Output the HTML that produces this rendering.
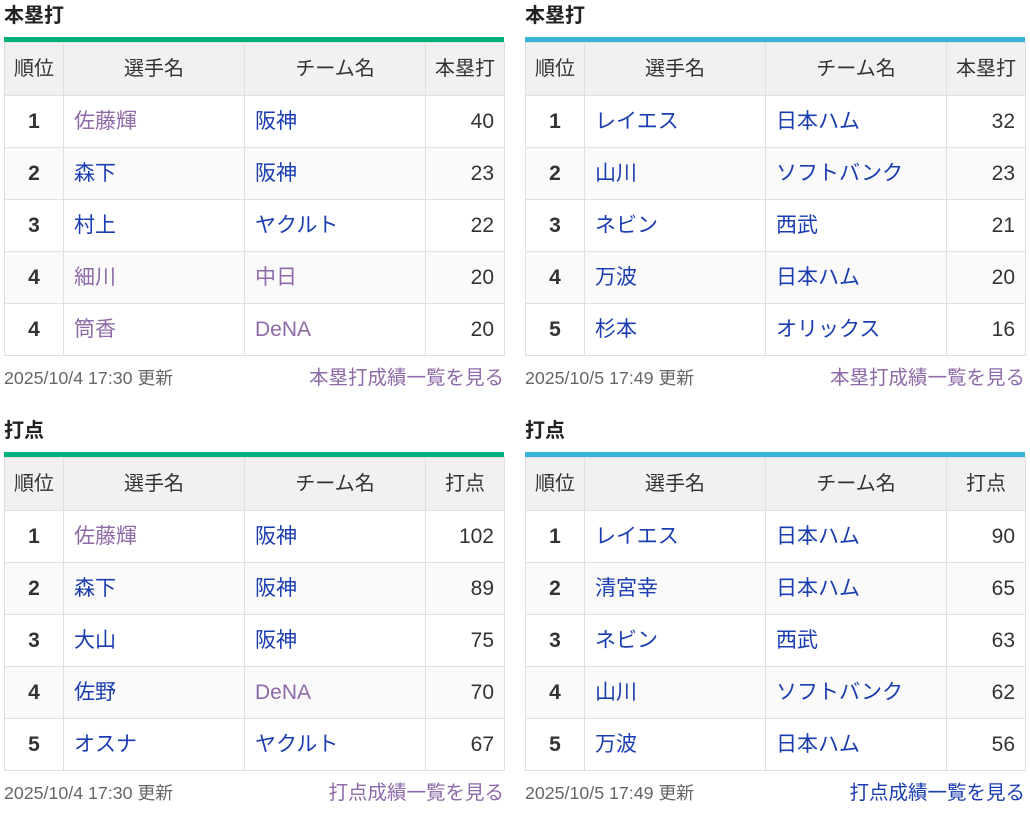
<!DOCTYPE html>
<html><head><meta charset="utf-8"><style>
body{margin:0;background:#fff;font-family:"Liberation Sans","Noto Sans CJK JP",sans-serif;color:#333;}
.blk{position:absolute;width:500px;}
h2{margin:0;height:37px;font-size:20px;font-weight:bold;line-height:32px;color:#222;}
.bar{height:5px;}
table{border-collapse:collapse;width:500px;table-layout:fixed;font-size:21px;}
td,th{border:1px solid #e0e0e0;height:52px;padding:0 10px;line-height:24px;vertical-align:middle;white-space:nowrap;box-sizing:border-box;}
th{background:#f1f1f1;font-weight:normal;color:#333;padding:0 2px;height:53px;font-size:20px;}
tr:nth-child(odd) td{background:#fafafa}
td.r{text-align:center;font-weight:bold;}
td.n{text-align:right;}
.v{color:#8e6aa8}.l{color:#1a3db0}
.ft{display:flex;justify-content:space-between;font-size:17.8px;color:#666;height:58px;line-height:44px;}
.ft a{color:#8e6aa8;font-size:19.5px;text-decoration:none}
.ft a.b{color:#1a3db0}
</style></head><body>
<div class="blk" style="left:4px;top:0">
<h2>本塁打</h2><div class="bar" style="background:#00b07b"></div>
<table><col style="width:59px"><col style="width:181px"><col style="width:181px"><col style="width:79px">
<tr><th>順位</th><th>選手名</th><th>チーム名</th><th>本塁打</th></tr>
<tr><td class="r">1</td><td class="v">佐藤輝</td><td class="l">阪神</td><td class="n">40</td></tr>
<tr><td class="r">2</td><td class="l">森下</td><td class="l">阪神</td><td class="n">23</td></tr>
<tr><td class="r">3</td><td class="l">村上</td><td class="l">ヤクルト</td><td class="n">22</td></tr>
<tr><td class="r">4</td><td class="v">細川</td><td class="v">中日</td><td class="n">20</td></tr>
<tr><td class="r">4</td><td class="v">筒香</td><td class="v">DeNA</td><td class="n">20</td></tr>
</table>
<div class="ft"><span>2025/10/4 17:30 更新</span><a>本塁打成績一覧を見る</a></div>
</div>
<div class="blk" style="left:525px;top:0">
<h2>本塁打</h2><div class="bar" style="background:#3ab4d6"></div>
<table><col style="width:59px"><col style="width:181px"><col style="width:181px"><col style="width:79px">
<tr><th>順位</th><th>選手名</th><th>チーム名</th><th>本塁打</th></tr>
<tr><td class="r">1</td><td class="l">レイエス</td><td class="l">日本ハム</td><td class="n">32</td></tr>
<tr><td class="r">2</td><td class="l">山川</td><td class="l">ソフトバンク</td><td class="n">23</td></tr>
<tr><td class="r">3</td><td class="l">ネビン</td><td class="l">西武</td><td class="n">21</td></tr>
<tr><td class="r">4</td><td class="l">万波</td><td class="l">日本ハム</td><td class="n">20</td></tr>
<tr><td class="r">5</td><td class="l">杉本</td><td class="l">オリックス</td><td class="n">16</td></tr>
</table>
<div class="ft"><span>2025/10/5 17:49 更新</span><a>本塁打成績一覧を見る</a></div>
</div>
<div class="blk" style="left:4px;top:415px">
<h2>打点</h2><div class="bar" style="background:#00b07b"></div>
<table><col style="width:59px"><col style="width:181px"><col style="width:181px"><col style="width:79px">
<tr><th>順位</th><th>選手名</th><th>チーム名</th><th>打点</th></tr>
<tr><td class="r">1</td><td class="v">佐藤輝</td><td class="l">阪神</td><td class="n">102</td></tr>
<tr><td class="r">2</td><td class="l">森下</td><td class="l">阪神</td><td class="n">89</td></tr>
<tr><td class="r">3</td><td class="l">大山</td><td class="l">阪神</td><td class="n">75</td></tr>
<tr><td class="r">4</td><td class="l">佐野</td><td class="v">DeNA</td><td class="n">70</td></tr>
<tr><td class="r">5</td><td class="l">オスナ</td><td class="l">ヤクルト</td><td class="n">67</td></tr>
</table>
<div class="ft"><span>2025/10/4 17:30 更新</span><a>打点成績一覧を見る</a></div>
</div>
<div class="blk" style="left:525px;top:415px">
<h2>打点</h2><div class="bar" style="background:#3ab4d6"></div>
<table><col style="width:59px"><col style="width:181px"><col style="width:181px"><col style="width:79px">
<tr><th>順位</th><th>選手名</th><th>チーム名</th><th>打点</th></tr>
<tr><td class="r">1</td><td class="l">レイエス</td><td class="l">日本ハム</td><td class="n">90</td></tr>
<tr><td class="r">2</td><td class="l">清宮幸</td><td class="l">日本ハム</td><td class="n">65</td></tr>
<tr><td class="r">3</td><td class="l">ネビン</td><td class="l">西武</td><td class="n">63</td></tr>
<tr><td class="r">4</td><td class="l">山川</td><td class="l">ソフトバンク</td><td class="n">62</td></tr>
<tr><td class="r">5</td><td class="l">万波</td><td class="l">日本ハム</td><td class="n">56</td></tr>
</table>
<div class="ft"><span>2025/10/5 17:49 更新</span><a class="b">打点成績一覧を見る</a></div>
</div>
</body></html>
